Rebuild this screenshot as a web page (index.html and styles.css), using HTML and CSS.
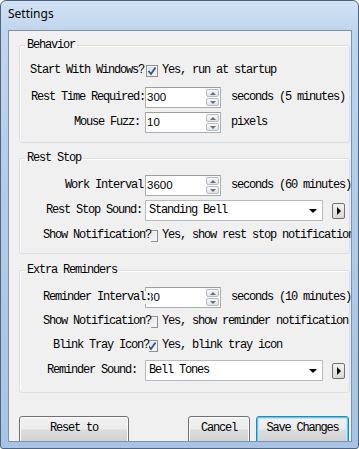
FILE: index.html
```html
<!DOCTYPE html>
<html>
<head>
<meta charset="utf-8">
<title>Settings</title>
<link rel="stylesheet" href="styles.css">
</head>
<body>
<div class="window">
  <div class="titlebar">Settings</div>
  <div class="client">

    <fieldset class="group g1">
      <legend>Behavior</legend>
      <div class="row">
        <div class="lab"><span class="e144">Start With Windows?</span></div>
        <div class="ctl">
          <span class="cb checked"><svg width="10" height="10" viewBox="0 0 10 10"><path d="M1.5 5 L4 8 L8.5 1.5" fill="none" stroke="#3b5289" stroke-width="1.8"/></svg></span>
          <span class="txt">Yes, run at startup</span>
        </div>
      </div>
      <div class="row r2">
        <div class="lab"><span class="e145">Rest Time Required:</span></div>
        <div class="ctl">
          <div class="num"><div class="val">300</div><div class="spin"><span class="sb"><i class="up"></i></span><span class="sb"><i class="dn"></i></span></div></div>
          <span class="unit">seconds (5 minutes)</span>
        </div>
      </div>
      <div class="row r3">
        <div class="lab"><span class="e140">Mouse Fuzz:</span></div>
        <div class="ctl">
          <div class="num"><div class="val">10</div><div class="spin"><span class="sb"><i class="up"></i></span><span class="sb"><i class="dn"></i></span></div></div>
          <span class="unit">pixels</span>
        </div>
      </div>
    </fieldset>

    <fieldset class="group g2">
      <legend>Rest Stop</legend>
      <div class="row">
        <div class="lab"><span class="e143">Work Interval</span></div>
        <div class="ctl">
          <div class="num"><div class="val">3600</div><div class="spin"><span class="sb"><i class="up"></i></span><span class="sb"><i class="dn"></i></span></div></div>
          <span class="unit">seconds (60 minutes)</span>
        </div>
      </div>
      <div class="row r4">
        <div class="lab"><span class="e142">Rest Stop Sound:</span></div>
        <div class="ctl">
          <div class="combo"><span class="ctext">Standing Bell</span><span class="arrow"></span></div>
          <span class="play"><i></i></span>
        </div>
      </div>
      <div class="row r4">
        <div class="lab"><span class="e150 cover">Show Notification?</span></div>
        <div class="ctl">
          <span class="cb"></span>
          <span class="txt">Yes, show rest stop notification</span>
        </div>
      </div>
    </fieldset>

    <fieldset class="group g3">
      <legend>Extra Reminders</legend>
      <div class="row">
        <div class="lab"><span class="e151 cover">Reminder Interval:</span></div>
        <div class="ctl">
          <div class="num"><div class="val">30</div><div class="spin"><span class="sb"><i class="up"></i></span><span class="sb"><i class="dn"></i></span></div></div>
          <span class="unit">seconds (10 minutes)</span>
        </div>
      </div>
      <div class="row r3b">
        <div class="lab"><span class="e150 cover">Show Notification?</span></div>
        <div class="ctl">
          <span class="cb"></span>
          <span class="txt">Yes, show reminder notification</span>
        </div>
      </div>
      <div class="row r3b">
        <div class="lab"><span class="e149 cover">Blink Tray Icon?</span></div>
        <div class="ctl">
          <span class="cb checked"><svg width="10" height="10" viewBox="0 0 10 10"><path d="M1.5 5 L4 8 L8.5 1.5" fill="none" stroke="#3b5289" stroke-width="1.8"/></svg></span>
          <span class="txt">Yes, blink tray icon</span>
        </div>
      </div>
      <div class="row r4">
        <div class="lab"><span class="e137">Reminder Sound:</span></div>
        <div class="ctl">
          <div class="combo"><span class="ctext">Bell Tones</span><span class="arrow"></span></div>
          <span class="play"><i></i></span>
        </div>
      </div>
    </fieldset>

    <div class="buttons">
      <button class="btn reset">Reset to</button>
      <button class="btn cancel">Cancel</button>
      <button class="btn save">Save Changes</button>
    </div>
  </div>
</div>
</body>
</html>
```

FILE: styles.css
```css
* { box-sizing: border-box; }
html, body { margin: 0; padding: 0; }
body { width: 359px; height: 449px; overflow: hidden; background: #fff; }

.window {
  width: 359px;
  height: 449px;
  border: 1px solid #4f6680;
  border-radius: 6px 6px 3px 3px;
  background: linear-gradient(180deg, #d2e2f4 0px, #c0d5ee 30px, #b3cbe8 200px, #a9c3e4 449px);
  display: flex;
  flex-direction: column;
  overflow: hidden;
}

.titlebar {
  height: 29px;
  padding: 5px 0 0 7px;
  font-family: "Noto Sans", "Open Sans", sans-serif;
  font-size: 12px;
  line-height: 16px;
  color: #000;
}

.client {
  margin-left: 7px;
  width: 344px;
  height: 412px;
  border: 1px solid #7d91a8;
  background: #f0f0f0;
  padding: 8px 0 0 10px;
  overflow: hidden;
  font-family: "Liberation Mono", "DejaVu Sans Mono", monospace;
  font-size: 12px;
  letter-spacing: -1.2px;
  line-height: 13px;
  color: #000;
}

.group {
  margin: 0;
  width: 331px;
  min-width: 0;
  border: 1px solid #d5dfe5;
  border-radius: 3px;
  box-shadow: inset 1px 1px 0 #fff;
  padding: 0;
}
.group legend {
  margin-left: 5px;
  padding: 0 2px;
  line-height: 13px;
  height: 13px;
}
.g1 { padding: 8px 0 9px 0; }
.g2 { margin-top: 9px; padding: 10px 0 7px 0; }
.g3 { margin-top: 10px; padding: 10px 0 11px 0; }

.row {
  display: grid;
  grid-template-columns: 125px 1fr;
  height: 21px;
  align-items: center;
}
.r2 { margin-top: 6px; }
.r3 { margin-top: 4px; }
.r4 { margin-top: 4px; }
.r3b { margin-top: 3px; }

.lab {
  display: flex;
  justify-content: flex-end;
  white-space: nowrap;
  height: 21px;
  align-items: center;
  position: relative;
  z-index: 1;
}
.lab span { white-space: nowrap; }
.cover { background: #f0f0f0; }
.e144 { margin-right: 1px; }
.e145 { margin-right: 0; }
.e140 { margin-right: 5px; }
.e143 { margin-right: 2px; }
.e142 { margin-right: 3px; }
.e150 { margin-right: -6px; }
.e151 { margin-right: -6px; }
.e149 { margin-right: -4px; }
.e137 { margin-right: 8px; }

.ctl {
  display: flex;
  align-items: center;
  white-space: nowrap;
  height: 21px;
}

.cb {
  width: 12px;
  height: 12px;
  margin-left: 1px;
  border: 1px solid #8e8f8f;
  background: linear-gradient(135deg, #dcdcdc, #fbfbfb);
  box-shadow: inset 0 0 0 1px #f4f4f4;
  display: flex;
  align-items: center;
  justify-content: center;
  flex: none;
}
.txt { margin-left: 4px; }

.num {
  width: 76px;
  height: 21px;
  border: 1px solid #abadb3;
  border-top-color: #9a9ca3;
  background: #fff;
  display: flex;
  flex: none;
}
.val {
  flex: 1;
  font-family: "Liberation Sans", Arial, sans-serif;
  font-size: 11.5px;
  letter-spacing: 0;
  line-height: 19px;
  padding-left: 1px;
  overflow: hidden;
}
.spin {
  width: 14px;
  display: flex;
  flex-direction: column;
  padding: 1px 1px 1px 0;
  gap: 1px;
}
.sb {
  flex: 1;
  border: 1px solid #b8bcc4;
  border-radius: 2px;
  background: linear-gradient(180deg, #f7f8fa, #dfe2e8);
  display: flex;
  align-items: center;
  justify-content: center;
}
.sb i {
  width: 0;
  height: 0;
  border-left: 3px solid transparent;
  border-right: 3px solid transparent;
}
.sb .up { border-bottom: 3px solid #6a6f78; }
.sb .dn { border-top: 3px solid #6a6f78; }

.unit { margin-left: 10px; }

.combo {
  width: 178px;
  height: 21px;
  border: 1px solid #b7bac0;
  background: #fff;
  display: flex;
  align-items: center;
  padding-left: 3px;
  flex: none;
}
.ctext { flex: 1; }
.arrow {
  width: 0;
  height: 0;
  border-left: 4px solid transparent;
  border-right: 4px solid transparent;
  border-top: 4px solid #000;
  margin-right: 5px;
}
.play {
  margin-left: 9px;
  width: 13px;
  height: 16px;
  border: 1px solid #707070;
  border-radius: 2px;
  background: linear-gradient(180deg, #f2f2f2, #d8d8d8);
  display: flex;
  align-items: center;
  justify-content: center;
  flex: none;
}
.play i {
  width: 0;
  height: 0;
  border-top: 4px solid transparent;
  border-bottom: 4px solid transparent;
  border-left: 4px solid #000;
  margin-left: 1px;
}

.buttons {
  display: flex;
  margin-top: 23px;
  padding-right: 2px;
}
.btn {
  height: 32px;
  border: 1px solid #707070;
  border-radius: 3px;
  background: linear-gradient(180deg, #f2f2f2 0px, #ebebeb 12px, #dddddd 13px, #cfcfcf 26px);
  box-shadow: inset 0 0 0 1px #fcfcfc;
  font-family: "Liberation Mono", "DejaVu Sans Mono", monospace;
  font-size: 12px;
  letter-spacing: -1.2px;
  line-height: 13px;
  color: #000;
  padding: 5px 0 0 0;
  display: flex;
  justify-content: center;
  align-items: flex-start;
  flex: none;
}
.reset { width: 110px; }
.cancel { width: 62px; margin-left: auto; }
.save {
  width: 93px;
  margin-left: 6px;
  border-color: #3c7fb1;
  box-shadow: inset 0 0 0 1px #48d4f6, inset 0 0 0 2px #c4e5f6;
}
```
